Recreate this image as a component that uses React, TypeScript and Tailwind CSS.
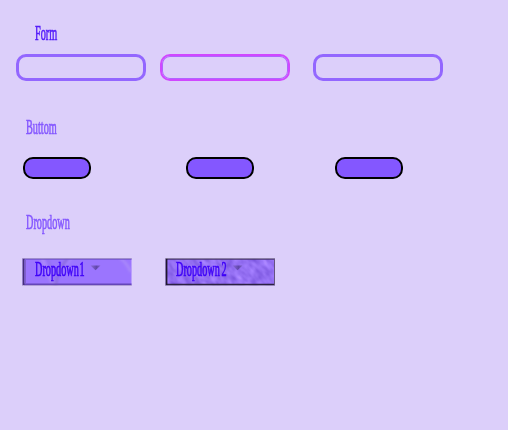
import type { ReactNode } from "react";

function Label({ children, className = "" }: { children: ReactNode; className?: string }) {
  return (
    <span
      className={`block w-max origin-left scale-x-[0.476] whitespace-nowrap font-['Liberation_Serif',serif] text-[21.5px] leading-[20px] [-webkit-text-stroke:0.7px_currentColor] ${className}`}
    >
      {children}
    </span>
  );
}

function Field({ className = "" }: { className?: string }) {
  return (
    <input
      aria-label="Field"
      className={`h-[27px] w-[130px] rounded-[10px] bg-transparent px-2 outline-none ${className}`}
    />
  );
}

function PillButton({ className = "" }: { className?: string }) {
  return (
    <button
      aria-label="Button"
      className={`h-[22px] w-[68px] rounded-[10px] border-2 border-black bg-[#8457ff] ${className}`}
    />
  );
}

function Caret({ className = "" }: { className?: string }) {
  return (
    <svg width="11" height="6" viewBox="0 0 11 6" className={className}>
      <defs>
        <linearGradient id="caret" x1="0" x2="1">
          <stop offset="0" stopColor="#8a6adb" />
          <stop offset="0.6" stopColor="#6147ab" />
          <stop offset="1" stopColor="#8062cc" />
        </linearGradient>
      </defs>
      <path d="M0.5 0.5H10.5L5.5 5.3Z" fill="url(#caret)" />
    </svg>
  );
}

function Streaks() {
  return (
    <svg width="110" height="28" viewBox="0 0 110 28" className="absolute inset-0">
      <defs>
        <filter id="soft">
          <feGaussianBlur stdDeviation="1" />
        </filter>
      </defs>
      <rect width="109.5" height="27.5" fill="#9b75fe" />
      <g filter="url(#soft)" fill="none">
        <path d="M20 0Q25 15 33 28" stroke="#b092f8" strokeWidth="4" opacity="0.7" />
        <path d="M46 0Q35 12 34 28" stroke="#8467d2" strokeWidth="3" opacity="0.6" />
        <path d="M25 0Q30 8 32 28" stroke="#8b6bdd" strokeWidth="2" opacity="0.5" />
        <path d="M98 0Q104 4 109 14" stroke="#b398f7" strokeWidth="3" opacity="0.5" />
        <path d="M50 0Q44 7 42 14" stroke="#b092f8" strokeWidth="2" opacity="0.5" />
      </g>
      <path d="M2 1H109.5" stroke="#7154c8" strokeWidth="1.3" />
      <path d="M2 26.4H109.5" stroke="#6546b8" strokeWidth="1.6" />
      <path d="M1.5 0.5V27" stroke="#443078" strokeWidth="1.8" />
      <path d="M3.5 2V26" stroke="#8060cc" strokeWidth="1" />
      <path d="M0 0V28M0 0.25H110M0 27.75H110" stroke="#b9afc8" strokeWidth="0.8" />
    </svg>
  );
}

function Grain() {
  return (
    <svg width="110" height="28" viewBox="0 0 110 28" className="absolute inset-0">
      <defs>
        <filter id="grain" x="0" y="0" width="100%" height="100%" colorInterpolationFilters="sRGB">
          <feTurbulence type="fractalNoise" baseFrequency="0.1 0.17" numOctaves="2" seed="7" result="noise" />
          <feColorMatrix
            in="noise"
            values="0.32 0 0 0 0.42  0.32 0 0 0 0.275  0.26 0 0 0 0.82  0 0 0 0 1"
          />
        </filter>
        <clipPath id="face">
          <rect width="110" height="28" />
        </clipPath>
      </defs>
      <g clipPath="url(#face)">
        <rect x="-20" y="-50" width="150" height="130" filter="url(#grain)" transform="rotate(50 55 14)" />
      </g>
      <path d="M1 1H110" stroke="#49366f" strokeWidth="1.4" />
      <path d="M1 26.5H110" stroke="#2b2142" strokeWidth="1.5" />
      <path d="M1.5 0.5V27" stroke="#1f182d" strokeWidth="1.8" />
      <path d="M109.5 1V27" stroke="#66547f" strokeWidth="1" />
      <path d="M0 0V28M0 0.25H110M0 27.75H110" stroke="#aaa3b2" strokeWidth="0.8" />
    </svg>
  );
}

export default function App() {
  return (
    <main className="h-[430px] w-[508px] overflow-hidden bg-[#dccffa] pt-[23px]">
      <section className="h-[94px]">
        <Label className="ml-[35px] text-[#541cfa]">Form</Label>
        <div className="mt-[11px] flex pl-4">
          <Field className="border-[3px] border-[#9367ff]" />
          <Field className="ml-[14px] border-2 border-[#d048ff] shadow-[inset_0_0_0_1px_#b064ff]" />
          <Field className="ml-[23px] border-[3px] border-[#9367ff]" />
        </div>
      </section>
      <section className="h-[95px]">
        <Label className="ml-[26px] text-[#8457ff]">Buttom</Label>
        <div className="mt-5 flex pl-[23px]">
          <PillButton />
          <PillButton className="ml-[95px]" />
          <PillButton className="ml-[81px]" />
        </div>
      </section>
      <section>
        <Label className="ml-[26px] text-[#8457ff]">Dropdown</Label>
        <div className="mt-[26px] flex gap-[33px] pl-[22px]">
          <button className="relative h-7 w-[110px]">
            <Streaks />
            <span className="relative flex h-full items-start pl-[13px] pt-px">
              <span className="w-[55px]">
                <Label className="text-[#3e00f8] [word-spacing:-4px]">Dropdown 1</Label>
              </span>
              <Caret className="mt-[6px]" />
            </span>
          </button>
          <button className="relative h-7 w-[110px]">
            <Grain />
            <span className="relative flex h-full items-start pl-[11px] pt-px">
              <span className="w-[56px]">
                <Label className="text-[#3e00f8] [word-spacing:-2px]">Dropdown 2</Label>
              </span>
              <Caret className="mt-[6px]" />
            </span>
          </button>
        </div>
      </section>
    </main>
  );
}
